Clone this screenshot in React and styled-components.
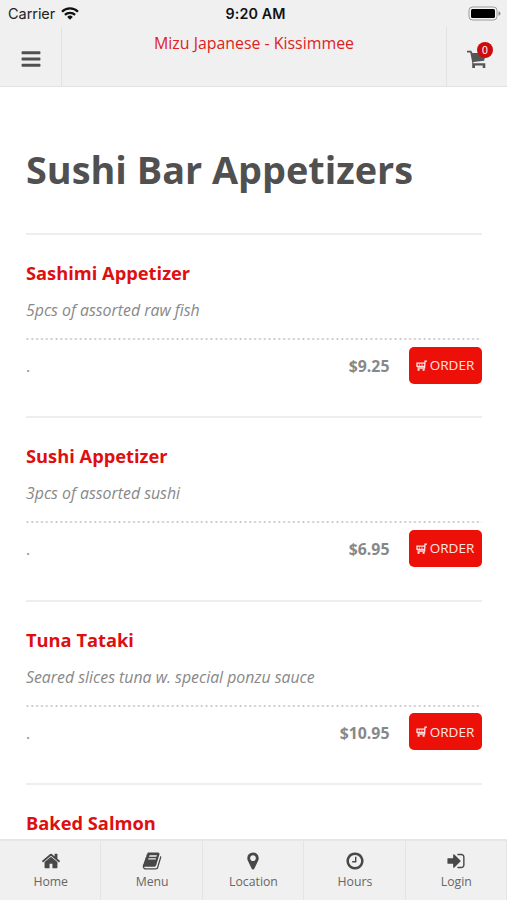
import React from "react";
import styled, { createGlobalStyle } from "styled-components";

const GlobalStyle = createGlobalStyle`
  * {
    box-sizing: border-box;
  }
  body {
    margin: 0;
    background: #fff;
    font-family: "Open Sans", "Noto Sans", sans-serif;
    overflow: hidden;
  }
`;

const Screen = styled.div`
  display: flex;
  flex-direction: column;
  width: 507px;
  height: 900px;
  overflow: hidden;
`;

const StatusBar = styled.div`
  flex: none;
  display: grid;
  grid-template-columns: 1fr auto 1fr;
  align-items: center;
  height: 27px;
  padding: 0 6px 0 8px;
  background: #f0f0f0;
  color: #222;
  font-family: Inter, sans-serif;
  font-size: 14.5px;
`;
const Carrier = styled.span`
  display: flex;
  align-items: center;
  gap: 6px;
  letter-spacing: -0.05px;
`;
const Clock = styled.span`
  padding-left: 2px;
  color: #111;
  font-size: 14.3px;
  font-weight: 600;
  letter-spacing: 0.1px;
`;
const BatteryIcon = styled.svg`
  justify-self: end;
`;

const Header = styled.header`
  flex: none;
  display: flex;
  height: 60px;
  background: #f0f0f0;
  border-bottom: 1px solid #e2e2e2;
`;
const HeaderButton = styled.button`
  display: flex;
  align-items: center;
  justify-content: center;
  width: ${(props) => props.$width}px;
  padding: 5px 0 0;
  border: 0;
  border-${(props) => props.$line}: 1px solid #e2e2e2;
  background: none;
  color: #505050;
`;
const ShopName = styled.div`
  flex: 1;
  padding-top: 5px;
  color: #dd2222;
  font-size: 15.9px;
  line-height: 22px;
  text-align: center;
`;
const CartWrap = styled.span`
  position: relative;
  display: flex;
`;
const Badge = styled.span`
  position: absolute;
  top: -8px;
  right: -6px;
  width: 16px;
  height: 16px;
  border-radius: 50%;
  background: #cf0a0a;
  color: #fff;
  font-size: 10.5px;
  line-height: 16px;
  text-align: center;
`;

const Content = styled.main`
  flex: 1;
  min-height: 0;
  padding: 0 25.5px 0 26px;
  overflow: hidden;
`;
const Title = styled.h1`
  height: 146px;
  margin: 0;
  padding-top: 56px;
  color: #505050;
  font-size: 37.85px;
  line-height: 54px;
  font-weight: 700;
  white-space: nowrap;
`;
const Item = styled.section`
  height: 183.3px;
  padding-top: 25px;
  border-top: 2px solid #eee;
`;
const ItemName = styled.h2`
  margin: 0;
  color: #dd0f0f;
  font-size: 18.3px;
  line-height: 26px;
  font-weight: 700;
`;
const Description = styled.p`
  height: 52px;
  margin: 0;
  padding-top: 13px;
  color: #888;
  font-size: 15.85px;
  line-height: 22px;
  font-style: italic;
`;
const Dots = styled.div`
  height: 2px;
  background: radial-gradient(circle, #c4c4c4 0.9px, transparent 1.2px) -1px 0 / 4.85px 2px;
`;
const PriceRow = styled.div`
  display: flex;
  align-items: center;
  height: 52px;
  color: #888;
  font-size: 15.85px;
`;
const Size = styled.span`
  flex: 1;
`;
const Price = styled.span`
  margin-right: 19px;
  font-weight: 700;
`;
const OrderButton = styled.button`
  display: flex;
  align-items: center;
  justify-content: center;
  gap: 3px;
  width: 73px;
  height: 37px;
  margin-bottom: 2px;
  padding: 0;
  border: 0;
  border-radius: 5px;
  background: #ed1009;
  color: #ffe6e4;
  font-family: inherit;
  font-size: 13.5px;
`;

const TabBar = styled.nav`
  flex: none;
  display: grid;
  grid-template-columns: repeat(5, 1fr);
  height: 61px;
  border-top: 2px solid #e6e6e6;
  background: #f0f0f0;
`;
const Tab = styled.a`
  display: flex;
  flex-direction: column;
  align-items: center;
  padding: 10px 0 0 1px;
  border-right: 1px solid #e4e4e4;
  color: #484848;
`;
const TabLabel = styled.span`
  margin-top: 1px;
  color: #666;
  font-size: 12.25px;
  line-height: 19px;
`;

const paths = {
  bars: "M1664 1344v128q0 26-19 45t-45 19h-1408q-26 0-45-19t-19-45v-128q0-26 19-45t45-19h1408q26 0 45 19t19 45zm0-512v128q0 26-19 45t-45 19h-1408q-26 0-45-19t-19-45v-128q0-26 19-45t45-19h1408q26 0 45 19t19 45zm0-512v128q0 26-19 45t-45 19h-1408q-26 0-45-19t-19-45v-128q0-26 19-45t45-19h1408q26 0 45 19t19 45z",
  home: "M1472 992v480q0 26-19 45t-45 19h-384v-384h-256v384h-384q-26 0-45-19t-19-45v-480q0-1 .5-3t.5-3l575-474 575 474q1 2 1 6zm223-69l-62 74q-8 9-21 11h-3q-13 0-21-7l-692-577-692 577q-12 8-24 7-13-2-21-11l-62-74q-8-10-7-23.5t11-21.5l719-599q32-26 76-26t76 26l244 204v-195q0-14 9-23t23-9h192q14 0 23 9t9 23v408l219 182q10 8 11 21.5t-7 23.5z",
  book: "M1703 478q40 57 18 129l-275 906q-19 64-76.5 107.5t-122.5 43.5h-923q-77 0-148.5-53.5t-99.5-131.5q-24-67-2-127 0-4 3-27t4-37q1-8-3-21.5t-3-19.5q2-11 8-21t16.5-23.5 16.5-23.5q23-38 45-91.5t30-91.5q3-10 .5-30t-.5-28q3-11 17-28t17-23q21-36 42-92t25-90q1-9-2.5-32t.5-28q4-13 22-30.5t22-22.5q19-26 42.5-84.5t27.5-96.5q1-8-3-25.5t-2-26.5q2-8 9-18t18-23 17-21q8-12 16.5-30.5t15-35 16-36 19.5-32 26.5-23.5 36-11.5 47.5 5.5l-1 3q38-9 51-9h761q74 0 114 56t18 130l-274 906q-36 119-71.5 153.5t-128.5 34.5h-869q-27 0-38 15-11 16-1 43 24 70 144 70h923q29 0 56-15.5t35-41.5l300-987q7-22 5-57 38 15 59 43zm-1064 2q-4 13 2 22.5t20 9.5h608q13 0 25.5-9.5t16.5-22.5l21-64q4-13-2-22.5t-20-9.5h-608q-13 0-25.5 9.5t-16.5 22.5zm-83 256q-4 13 2 22.5t20 9.5h608q13 0 25.5-9.5t16.5-22.5l21-64q4-13-2-22.5t-20-9.5h-608q-13 0-25.5 9.5t-16.5 22.5z",
  marker: "M1152 640q0-106-75-181t-181-75-181 75-75 181 75 181 181 75 181-75 75-181zm256 0q0 109-33 179l-364 774q-16 33-47.5 52t-67.5 19-67.5-19-46.5-52l-365-774q-33-70-33-179 0-212 150-362t362-150 362 150 150 362z",
  clock: "M1024 544v448q0 14-9 23t-23 9h-320q-14 0-23-9t-9-23v-64q0-14 9-23t23-9h224v-352q0-14 9-23t23-9h64q14 0 23 9t9 23zm416 352q0-148-73-273t-198-198-273-73-273 73-198 198-73 273 73 273 198 198 273 73 273-73 198-198 73-273zm224 0q0 209-103 385.5t-279.5 279.5-385.5 103-385.5-103-279.5-279.5-103-385.5 103-385.5 279.5-279.5 385.5-103 385.5 103 279.5 279.5 103 385.5z",
  login: "M1312 896q0 26-19 45l-544 544q-19 19-45 19t-45-19-19-45v-288h-448q-26 0-45-19t-19-45v-384q0-26 19-45t45-19h448v-288q0-26 19-45t45-19 45 19l544 544q19 19 19 45zm352-352v704q0 119-84.5 203.5t-203.5 84.5h-320q-13 0-22.5-9.5t-9.5-22.5q0-4-1-20t-.5-26.5 3-23.5 10-19.5 20.5-6.5h320q66 0 113-47t47-113v-704q0-66-47-113t-113-47h-312l-11.5-1-11.5-3-8-5.5-7-9-2-13.5q0-4-1-20t-.5-26.5 3-23.5 10-19.5 20.5-6.5h320q119 0 203.5 84.5t84.5 203.5z",
};

const Icon = ({ name, size }) => (
  <svg width={size} height={size} viewBox="0 0 1792 1792" fill="currentColor">
    <path d={paths[name]} />
  </svg>
);

const WifiIcon = () => (
  <svg width="18" height="13" viewBox="0 0 18 13" fill="none" stroke="#111" strokeWidth="2.3">
    <path d="M1 4.7a11.4 11.4 0 0 1 16 0" />
    <path d="M3.9 7.9a7.2 7.2 0 0 1 10.2 0" />
    <path d="M6.2 9.9a4 4 0 0 1 5.6 0L9 12.7z" fill="#111" stroke="none" />
  </svg>
);

const CartIcon = () => (
  <svg width="20" height="19" viewBox="0 0 20 19" fill="#555">
    <path d="M0 .8h4.3l1 2.2H19l-1.9 7.8L6.3 12v1.3h12V18h-2.6v-2.4H8V18H5.2v-5.8L3.3 2.6H0z" />
  </svg>
);

const SmallCartIcon = () => (
  <svg width="11" height="11" viewBox="0 0 11 11" fill="none" stroke="currentColor" strokeWidth="1.3">
    <path d="M11 1.2H9L8.6 8H1.4M8.6 3.2H1v3.2h7.6" />
    <path d="M3.4 3.2v3M6 3.2v3" strokeWidth="0.6" />
    <path d="M1.6 9.9h2M6.6 9.9h2" strokeWidth="1.7" />
  </svg>
);

const items = [
  { name: "Sashimi Appetizer", text: "5pcs of assorted raw fish", price: "$9.25" },
  { name: "Sushi Appetizer", text: "3pcs of assorted sushi", price: "$6.95" },
  { name: "Tuna Tataki", text: "Seared slices tuna w. special ponzu sauce", price: "$10.95" },
  { name: "Baked Salmon" },
];

const tabs = [
  { icon: "home", label: "Home" },
  { icon: "book", label: "Menu" },
  { icon: "marker", label: "Location" },
  { icon: "clock", label: "Hours" },
  { icon: "login", label: "Login" },
];

const MenuItem = ({ item }) => (
  <Item>
    <ItemName>{item.name}</ItemName>
    {item.price && (
      <>
        <Description>{item.text}</Description>
        <Dots />
        <PriceRow>
          <Size>.</Size>
          <Price>{item.price}</Price>
          <OrderButton>
            <SmallCartIcon />
            ORDER
          </OrderButton>
        </PriceRow>
      </>
    )}
  </Item>
);

const App = () => {
  return (
    <Screen>
      <GlobalStyle />
      <StatusBar>
        <Carrier>
          Carrier
          <WifiIcon />
        </Carrier>
        <Clock>9:20 AM</Clock>
        <BatteryIcon width="33" height="15" viewBox="0 0 33 15">
          <rect x="1" y="1" width="28" height="13" rx="3.5" fill="#f4f4f4" stroke="#999" />
          <rect x="3" y="3" width="24" height="9" rx="1.5" fill="#000" />
          <path d="M30.5 5.2q2 .6 2 2.3t-2 2.3z" fill="#888" />
        </BatteryIcon>
      </StatusBar>
      <Header>
        <HeaderButton $width={62} $line="right">
          <Icon name="bars" size={22} />
        </HeaderButton>
        <ShopName>Mizu Japanese - Kissimmee</ShopName>
        <HeaderButton $width={61} $line="left">
          <CartWrap>
            <CartIcon />
            <Badge>0</Badge>
          </CartWrap>
        </HeaderButton>
      </Header>
      <Content>
        <Title>Sushi Bar Appetizers</Title>
        {items.map((item) => (
          <MenuItem key={item.name} item={item} />
        ))}
      </Content>
      <TabBar>
        {tabs.map((tab) => (
          <Tab key={tab.label}>
            <Icon name={tab.icon} size={20} />
            <TabLabel>{tab.label}</TabLabel>
          </Tab>
        ))}
      </TabBar>
    </Screen>
  );
};

export default App;
